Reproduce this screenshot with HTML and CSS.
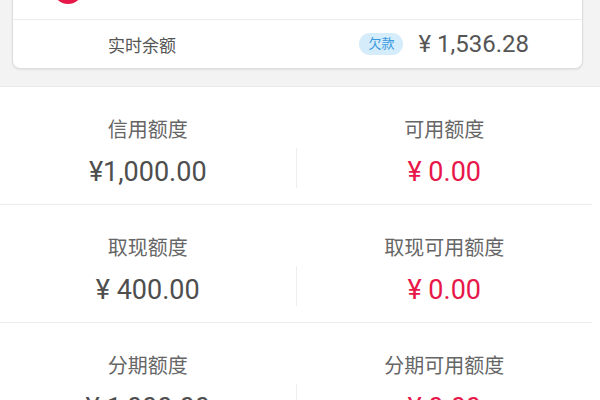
FILE: index.html
```html
<!DOCTYPE html>
<html>
<head>
	<meta charset="utf-8">
	<title>额度</title>
	<link rel="stylesheet" href="styles.css">
</head>
<body>
	<div class="top">
		<div class="card">
			<div class="card-head">
				<span class="logo"></span>
				<span class="card-name">招商银行信用卡尾号8888</span>
			</div>
			<div class="card-row">
				<span class="row-label">实时余额</span>
				<span class="row-right">
					<span class="badge">欠款</span>
					<span class="balance">¥ 1,536.28</span>
				</span>
			</div>
		</div>
	</div>

	<div class="list">
		<div class="item">
			<div class="cell">
				<p class="label">信用额度</p>
				<p class="value">¥1,000.00</p>
			</div>
			<div class="sep"></div>
			<div class="cell">
				<p class="label">可用额度</p>
				<p class="value red">¥ 0.00</p>
			</div>
		</div>
		<div class="item">
			<div class="cell">
				<p class="label">取现额度</p>
				<p class="value">¥ 400.00</p>
			</div>
			<div class="sep"></div>
			<div class="cell">
				<p class="label">取现可用额度</p>
				<p class="value red">¥ 0.00</p>
			</div>
		</div>
		<div class="item">
			<div class="cell">
				<p class="label">分期额度</p>
				<p class="value">¥ 1,000.00</p>
			</div>
			<div class="sep"></div>
			<div class="cell">
				<p class="label">分期可用额度</p>
				<p class="value red">¥ 0.00</p>
			</div>
		</div>
	</div>
</body>
</html>
```

FILE: styles.css
```css
	body{
		margin: 0;
		background: #fff;
		font-family: Roboto, "Noto Sans CJK SC", sans-serif;
		overflow: hidden;
	}
	p{
		margin: 0;
	}

	.top{
		display: flow-root;
		background: #f3f3f3;
		padding: 0 17px 17px 12px;
		border-bottom: 1px solid #e9e9e9;
	}
	.card{
		margin-top: -41px;
		background: #fff;
		border: 1px solid #dedede;
		border-radius: 8px;
		box-shadow: 0 1px 2px rgba(0,0,0,0.08);
	}
	.card-head{
		height: 59px;
		display: flex;
		align-items: center;
		padding-left: 40px;
		border-bottom: 1px solid #ececec;
	}
	.logo{
		width: 30px;
		height: 30px;
		border-radius: 50%;
		background: #e8174a;
		margin-top: -2px;
	}
	.card-name{
		margin-left: 48px;
		margin-top: -2px;
		font-size: 20px;
		color: #888;
	}
	.card-row{
		height: 48px;
		display: flex;
		align-items: center;
		justify-content: space-between;
		padding: 0 53px 0 95px;
	}
	.row-label{
		font-size: 17px;
		color: #555;
	}
	.row-right{
		display: flex;
		align-items: center;
	}
	.badge{
		background: #d5ecfb;
		color: #3798e0;
		font-size: 13px;
		line-height: 18px;
		padding: 2px 9px;
		border-radius: 11px;
		margin-right: 15px;
	}
	.balance{
		font-size: 24px;
		color: #555;
	}

	.list{
		width: 592px;
	}
	.item{
		height: 117px;
		display: flex;
		border-bottom: 1px solid #ececec;
	}
	.cell{
		flex: 1;
		text-align: center;
		padding-top: 30px;
	}
	.sep{
		width: 1px;
		height: 40px;
		background: #eeeeee;
		margin-top: 61px;
	}
	.label{
		font-size: 20px;
		color: #666;
		line-height: 26px;
	}
	.value{
		font-size: 27px;
		color: #4e4e4e;
		line-height: 32px;
		margin-top: 13px;
	}
	.red{
		color: #e8174a;
	}
```
